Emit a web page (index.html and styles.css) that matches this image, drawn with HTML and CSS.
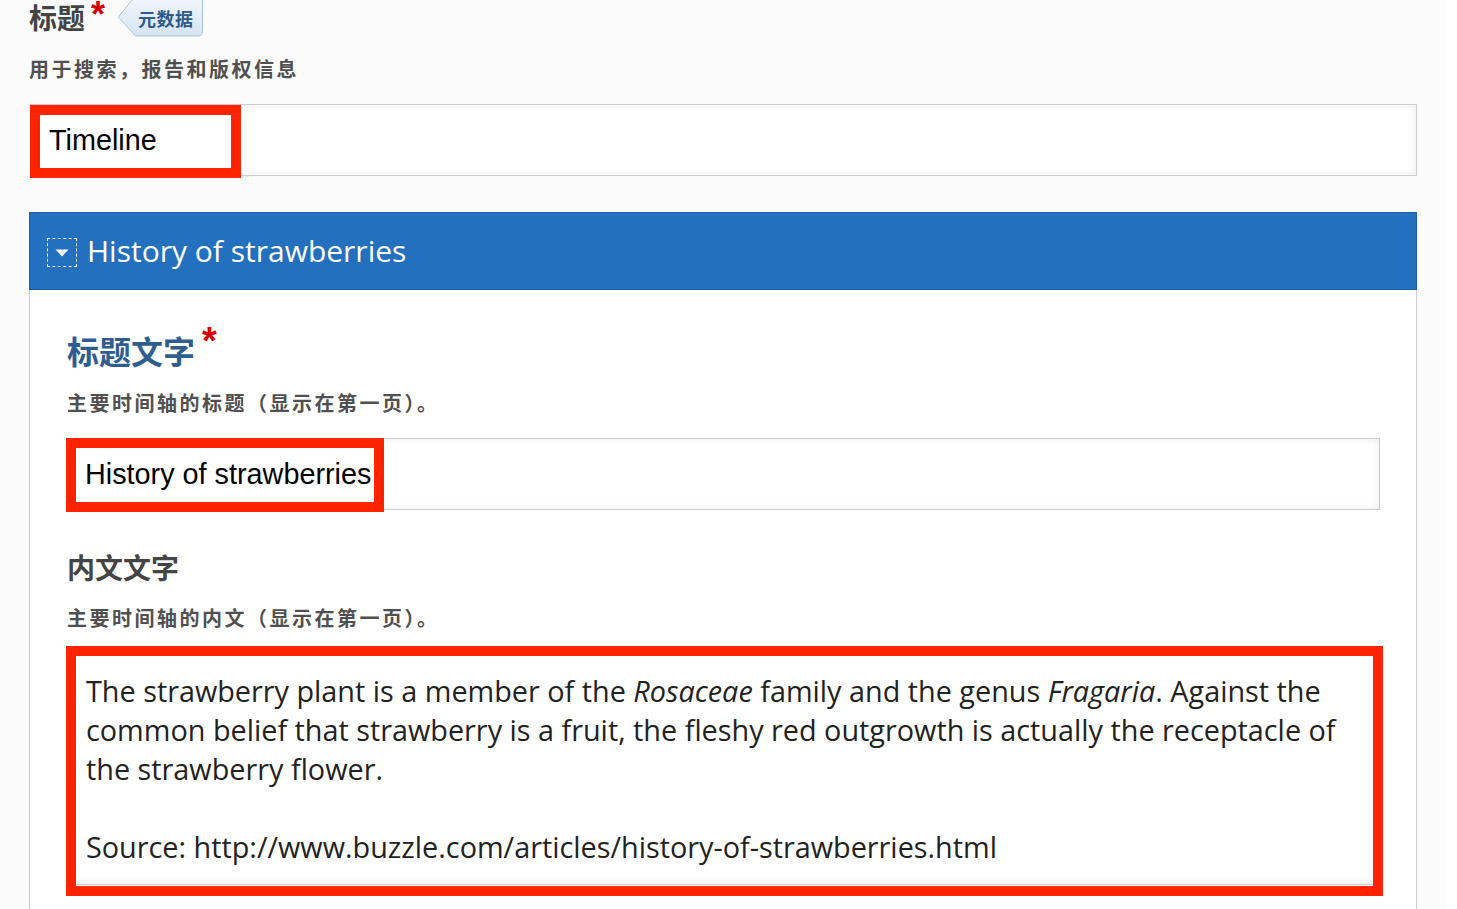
FILE: index.html
```html
<!DOCTYPE html>
<html lang="zh-CN">
<head>
<meta charset="utf-8">
<title>Timeline</title>
<link rel="stylesheet" href="styles.css">
</head>
<body>
<div class="page">
  <div class="content">
    <div class="field-head">
      <span class="label-top">标题</span><span class="req">*</span>
      <span class="badge">
        <svg class="badge-shape" width="88" height="40" viewBox="0 0 88 40">
          <defs>
            <linearGradient id="bg" x1="0" y1="0" x2="0" y2="1">
              <stop offset="0" stop-color="#f1f6fb"/>
              <stop offset="1" stop-color="#d5e4f2"/>
            </linearGradient>
          </defs>
          <path d="M1.5 20 L17 0.5 H81 Q85.5 0.5 85.5 5 V34.5 Q85.5 39 81 39 H18.5 Z" fill="url(#bg)" stroke="#a9c3dd" stroke-width="1"/>
        </svg>
        <span class="badge-text">元数据</span>
      </span>
    </div>
    <p class="desc desc-top">用于搜索，报告和版权信息</p>
    <div class="input-wrap wrap-title">
      <input class="text-input" type="text" value="Timeline">
      <span class="mark mark-title"></span>
    </div>

    <div class="section">
      <div class="section-head">
        <span class="toggle">
          <svg width="14" height="8" viewBox="0 0 14 8"><path d="M0.5 0.5 H13.5 L7 7.5 Z" fill="#ffffff"/></svg>
        </span>
        <span class="section-title">History of strawberries</span>
      </div>
      <div class="section-body">
        <div class="field-label label-blue">标题文字<span class="req req-big">*</span></div>
        <p class="desc">主要时间轴的标题（显示在第一页）。</p>
        <div class="input-wrap wrap-headline">
          <input class="text-input" type="text" value="History of strawberries">
          <span class="mark mark-headline"></span>
        </div>

        <div class="field-label label-gray">内文文字</div>
        <p class="desc">主要时间轴的内文（显示在第一页）。</p>
        <div class="input-wrap wrap-text">
          <div class="textarea">
            <p>The strawberry plant is a member of the <em>Rosaceae</em> family and the genus <em>Fragaria</em>. Against the<br>common belief that strawberry is a fruit, the fleshy red outgrowth is actually the receptacle of<br>the strawberry flower.</p>
            <p>Source: http://www.buzzle.com/articles/history-of-strawberries.html</p>
          </div>
          <span class="mark mark-text"></span>
        </div>
      </div>
    </div>
  </div>
</div>
</body>
</html>
```
FILE: styles.css
```css
html, body {
  margin: 0;
  padding: 0;
  background: #ffffff;
  overflow: hidden;
}

body {
  font-family: "Noto Sans CJK SC", "Open Sans", sans-serif;
  color: #444444;
}

.page {
  width: 1445px;
  height: 909px;
  background: #fbfbfb;
  padding-left: 29px;
  box-sizing: border-box;
}

.content {
  width: 1388px;
}

/* top field heading */
.field-head {
  display: flex;
  align-items: flex-start;
  height: 36px;
}

.label-top {
  font-size: 28px;
  font-weight: 700;
  line-height: 34px;
  color: #444444;
}

.req {
  font-family: "Liberation Sans", sans-serif;
  color: #d40000;
  font-weight: 700;
  font-size: 36px;
  line-height: 30px;
  margin-left: 6px;
}

.badge {
  position: relative;
  width: 88px;
  height: 40px;
  margin-top: -3px;
  margin-left: 12px;
}

.badge-shape {
  position: absolute;
  left: 0;
  top: 0;
}

.badge-text {
  position: absolute;
  left: 21px;
  top: 9px;
  font-size: 18px;
  line-height: 24px;
  font-weight: 700;
  color: #2d5b8b;
  letter-spacing: 0.5px;
  white-space: nowrap;
}

.desc {
  margin: 0;
  font-size: 20px;
  line-height: 28px;
  letter-spacing: 2.5px;
  font-weight: 700;
  color: #505050;
}

.desc-top {
  margin-top: 19px;
}

/* inputs */
.input-wrap {
  position: relative;
}

.text-input {
  display: block;
  box-sizing: border-box;
  height: 72px;
  margin: 0;
  padding: 0 18px;
  border: 1px solid #cccccc;
  background: #ffffff;
  box-shadow: inset 0 0 9px rgba(0, 0, 0, 0.08);
  font-family: "Liberation Sans", Arial, sans-serif;
  font-size: 28.8px;
  color: #000000;
  outline: none;
}

.wrap-title {
  margin-top: 21px;
  margin-left: 1px;
}

.wrap-title .text-input {
  width: 1387px;
}

.mark {
  position: absolute;
  border: 10px solid #ff2300;
  box-sizing: border-box;
  pointer-events: none;
}

.mark-title {
  left: 0;
  top: 1px;
  width: 211px;
  height: 73px;
}

/* section */
.section {
  margin-top: 36px;
}

.section-head {
  display: flex;
  align-items: center;
  height: 78px;
  box-sizing: border-box;
  background: #2270be;
  border: 1px solid #1d5fa6;
  padding-left: 17px;
}

.toggle {
  display: flex;
  align-items: center;
  justify-content: center;
  width: 30px;
  height: 29px;
  box-sizing: border-box;
  border: 1px dashed #ffffff;
  margin-top: 2px;
}

.toggle svg {
  display: block;
  margin-top: 2px;
}

.section-title {
  margin-left: 10px;
  font-family: "Open Sans", sans-serif;
  font-size: 30px;
  font-weight: 500;
  color: #ffffff;
  line-height: 40px;
}

.section-body {
  background: #ffffff;
  border-left: 1px solid #cccccc;
  border-right: 1px solid #cccccc;
  height: 700px;
  padding: 40px 36px 0 36px;
}

.field-label {
  font-weight: 700;
  display: flex;
  align-items: flex-start;
  margin-left: 1px;
}

.label-blue {
  font-size: 32px;
  line-height: 40px;
  color: #2e5d8f;
}

.req-big {
  margin-left: 7px;
  margin-top: -4px;
  font-size: 38px;
}

.label-gray {
  margin-top: 40px;
  font-size: 28px;
  line-height: 34px;
  color: #444444;
}

.section-body .desc {
  margin-top: 19px;
  margin-left: 1px;
}

.label-gray + .desc {
  margin-top: 20px;
}

.wrap-headline {
  margin-top: 21px;
}

.wrap-headline .text-input {
  width: 1314px;
}

.mark-headline {
  left: 0;
  top: 0;
  width: 318px;
  height: 74px;
}

.wrap-text {
  margin-top: 14px;
}

.textarea {
  width: 1314px;
  height: 239px;
  box-sizing: border-box;
  border: 1px solid #cccccc;
  background: #ffffff;
  box-shadow: inset 0 -4px 6px rgba(0, 0, 0, 0.05);
  padding: 24px 19px 0 19px;
  font-family: "Open Sans", sans-serif;
  font-size: 28.8px;
  line-height: 39px;
  color: #222222;
  white-space: nowrap;
}

.textarea p {
  margin: 0 0 39px 0;
}

.mark-text {
  left: 0;
  top: 0;
  width: 1317px;
  height: 250px;
}
```
